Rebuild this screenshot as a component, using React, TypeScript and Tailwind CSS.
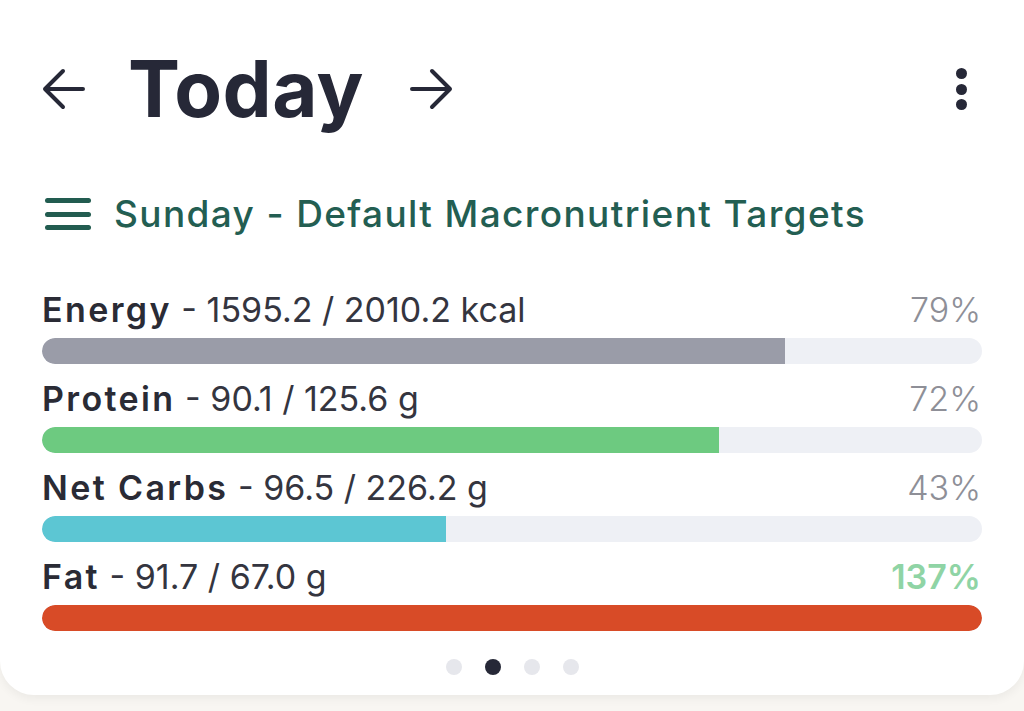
const macros = [
  { name: 'Energy', value: '1595.2 / 2010.2 kcal', pct: 79, fill: 'bg-[#9a9ca8]', over: false },
  { name: 'Protein', value: '90.1 / 125.6 g', pct: 72, fill: 'bg-[#6dca80]', over: false },
  { name: 'Net Carbs', value: '96.5 / 226.2 g', pct: 43, fill: 'bg-[#5cc6d3]', over: false },
  { name: 'Fat', value: '91.7 / 67.0 g', pct: 137, fill: 'bg-[#d84b27]', over: true },
];

function ArrowLeft() {
  return (
    <svg width="44" height="44" viewBox="0 0 44 44" fill="none" stroke="#262837" strokeWidth="4" strokeLinecap="round" strokeLinejoin="round">
      <path d="M3 22 H41 M3 22 L21 4 M3 22 L21 40" />
    </svg>
  );
}

function ArrowRight() {
  return (
    <svg width="44" height="44" viewBox="0 0 44 44" fill="none" stroke="#262837" strokeWidth="4" strokeLinecap="round" strokeLinejoin="round">
      <path d="M41 22 H3 M41 22 L23 4 M41 22 L23 40" />
    </svg>
  );
}

function App() {
  return (
    <div className="w-full h-[711px] bg-[#f8f6f2] overflow-hidden" style={{ fontFamily: 'Inter, "Noto Sans", sans-serif' }}>
      <div className="w-full bg-white rounded-b-[34px] shadow-[0_4px_10px_rgba(0,0,0,0.05)] px-[42px] pt-[44px] pb-[20px]">
        <div className="h-[90px] flex items-center">
          <ArrowLeft />
          <div className="ml-[42px] text-[78px] leading-[90px] font-bold text-[#262837] tracking-[0.005em]">Today</div>
          <div className="ml-[45px]">
            <ArrowRight />
          </div>
          <div className="ml-auto mr-[15px] flex flex-col gap-[4.5px]">
            <div className="w-[11px] h-[11px] rounded-full bg-[#262837]"></div>
            <div className="w-[11px] h-[11px] rounded-full bg-[#262837]"></div>
            <div className="w-[11px] h-[11px] rounded-full bg-[#262837]"></div>
          </div>
        </div>

        <div className="mt-[58px] h-[44px] flex items-center">
          <div className="ml-[3px] w-[46px] flex flex-col gap-[8.5px]">
            <div className="h-[5px] rounded-full bg-[#225c50]"></div>
            <div className="h-[5px] rounded-full bg-[#225c50]"></div>
            <div className="h-[5px] rounded-full bg-[#225c50]"></div>
          </div>
          <div className="ml-[23px] text-[37px] leading-[44px] font-medium text-[#235e52] tracking-[0.037em]">
            Sunday - Default Macronutrient Targets
          </div>
        </div>

        <div className="mt-[54px] flex flex-col gap-[15px]">
          {macros.map((m) => (
            <div key={m.name} className="flex flex-col gap-[8px]">
              <div className="h-[40px] flex items-center justify-between text-[34px] leading-[40px]">
                <div className="text-[#34353f]">
                  <span className="font-semibold text-[#2a2b35] tracking-[0.07em]">{m.name}</span>
                  <span className="font-normal"> - {m.value}</span>
                </div>
                <div className={m.over ? 'mr-[1px] font-semibold text-[#8fd4a5]' : 'mr-[1px] font-light text-[#8e8f97]'}>{m.pct}%</div>
              </div>
              <div className="h-[26px] w-full rounded-full bg-[#eef0f5] overflow-hidden">
                <div className={`h-full rounded-l-full ${m.fill} ${m.over ? 'rounded-r-full' : ''}`} style={{ width: `${Math.min(m.pct, 100)}%` }}></div>
              </div>
            </div>
          ))}
        </div>

        <div className="mt-[28px] flex justify-center gap-[23px]">
          <div className="w-[16px] h-[16px] rounded-full bg-[#e6e7ec]"></div>
          <div className="w-[16px] h-[16px] rounded-full bg-[#262837]"></div>
          <div className="w-[16px] h-[16px] rounded-full bg-[#e6e7ec]"></div>
          <div className="w-[16px] h-[16px] rounded-full bg-[#e6e7ec]"></div>
        </div>
      </div>
    </div>
  );
}

export default App;
